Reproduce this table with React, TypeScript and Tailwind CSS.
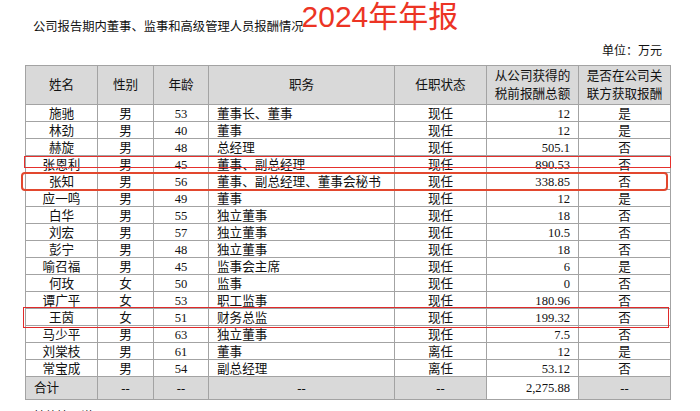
import React from "react";

const rows: string[][] = [
  ["施驰", "男", "53", "董事长、董事", "现任", "12", "是"],
  ["林劲", "男", "40", "董事", "现任", "12", "是"],
  ["赫旋", "男", "48", "总经理", "现任", "505.1", "否"],
  ["张恩利", "男", "45", "董事、副总经理", "现任", "890.53", "否"],
  ["张知", "男", "56", "董事、副总经理、董事会秘书", "现任", "338.85", "否"],
  ["应一鸣", "男", "49", "董事", "现任", "12", "是"],
  ["白华", "男", "55", "独立董事", "现任", "18", "否"],
  ["刘宏", "男", "57", "独立董事", "现任", "10.5", "否"],
  ["彭宁", "男", "48", "独立董事", "现任", "18", "否"],
  ["喻召福", "男", "45", "监事会主席", "现任", "6", "是"],
  ["何玫", "女", "50", "监事", "现任", "0", "否"],
  ["谭广平", "女", "53", "职工监事", "现任", "180.96", "否"],
  ["王茵", "女", "51", "财务总监", "现任", "199.32", "否"],
  ["马少平", "男", "63", "独立董事", "现任", "7.5", "否"],
  ["刘棠枝", "男", "61", "董事", "离任", "12", "是"],
  ["常宝成", "男", "54", "副总经理", "离任", "53.12", "否"],
];

const serif = { fontFamily: '"Liberation Serif", "Noto Sans CJK SC", serif' };

export default function App() {
  const cell = "border-r border-b border-[#a3a3a3] flex items-center";
  return (
    <div
      className="w-[700px] h-[411px] bg-white overflow-hidden text-[#111]"
      style={serif}
    >
      <div className="h-[38px] flex items-end pl-[33px] pb-[6px]">
        <span className="text-[12.3px] leading-none" style={{ fontFamily: '"Noto Sans CJK SC", sans-serif' }}>
          公司报告期内董事、监事和高级管理人员报酬情况
        </span>
        <span
          className="text-[30px] leading-none text-[#ec3424] -ml-[2px]"
          style={{ fontFamily: '"Liberation Sans", "Noto Sans CJK SC", sans-serif' }}
        >
          2024年年报
        </span>
      </div>
      <div className="h-[27px] flex justify-end pr-[38px] pt-[5px] text-[12px] leading-[16px]">
        单位：万元
      </div>
      <div className="ml-[25px] w-[646px] relative">
        <div className="grid grid-cols-[72px_56px_55px_186px_92px_92px_92px] border-l border-t border-[#a3a3a3] text-[12.6px]">
          {["姓名", "性别", "年龄", "职务", "任职状态"].map((h) => (
            <div key={h} className={`${cell} h-[39px] justify-center bg-[#d9d9d9]`}>
              {h}
            </div>
          ))}
          <div className={`${cell} h-[39px] justify-center bg-[#d9d9d9] text-center leading-[18px]`}>
            从公司获得的
            <br />
            税前报酬总额
          </div>
          <div className={`${cell} h-[39px] justify-center bg-[#d9d9d9] text-center leading-[18px]`}>
            是否在公司关
            <br />
            联方获取报酬
          </div>
          {rows.map((r, i) => (
            <React.Fragment key={i}>
              <div className={`${cell} h-[17px] justify-center pt-[2px]`}>{r[0]}</div>
              <div className={`${cell} h-[17px] justify-center pt-[2px]`}>{r[1]}</div>
              <div className={`${cell} h-[17px] justify-center pt-[2px]`}>{r[2]}</div>
              <div className={`${cell} h-[17px] justify-start pl-[8px] pt-[2px]`}>{r[3]}</div>
              <div className={`${cell} h-[17px] justify-center pt-[2px]`}>{r[4]}</div>
              <div className={`${cell} h-[17px] justify-end pr-[8px] pt-[2px]`}>{r[5]}</div>
              <div className={`${cell} h-[17px] justify-center pt-[2px]`}>{r[6]}</div>
            </React.Fragment>
          ))}
          <div className={`${cell} h-[23px] justify-start pl-[8px] bg-[#d9d9d9]`}>合计</div>
          <div className={`${cell} h-[23px] justify-center bg-[#d9d9d9]`}>--</div>
          <div className={`${cell} h-[23px] justify-center bg-[#d9d9d9]`}>--</div>
          <div className={`${cell} h-[23px] justify-center bg-[#d9d9d9]`}>--</div>
          <div className={`${cell} h-[23px] justify-center bg-[#d9d9d9]`}>--</div>
          <div className={`${cell} h-[23px] justify-end pr-[8px] bg-white`}>2,275.88</div>
          <div className={`${cell} h-[23px] justify-center bg-[#d9d9d9]`}>--</div>
        </div>
        <div className="absolute left-[-1px] top-[91px] w-[647px] h-[12px] border-[1.5px] border-[#e5302c]" />
        <div className="absolute left-[-4px] top-[107px] w-[647px] h-[19px] border-2 border-[#e2472e] rounded-[4px]" />
        <div className="absolute left-[-2px] top-[242px] w-[646px] h-[21px] border-[1.5px] border-[#e02a2a]" />
      </div>
      <div className="pl-[33px] pt-[8px] text-[12px] leading-[16px]" style={{ fontFamily: '"Noto Sans CJK SC", sans-serif' }}>
        其他情况说明
      </div>
    </div>
  );
}
